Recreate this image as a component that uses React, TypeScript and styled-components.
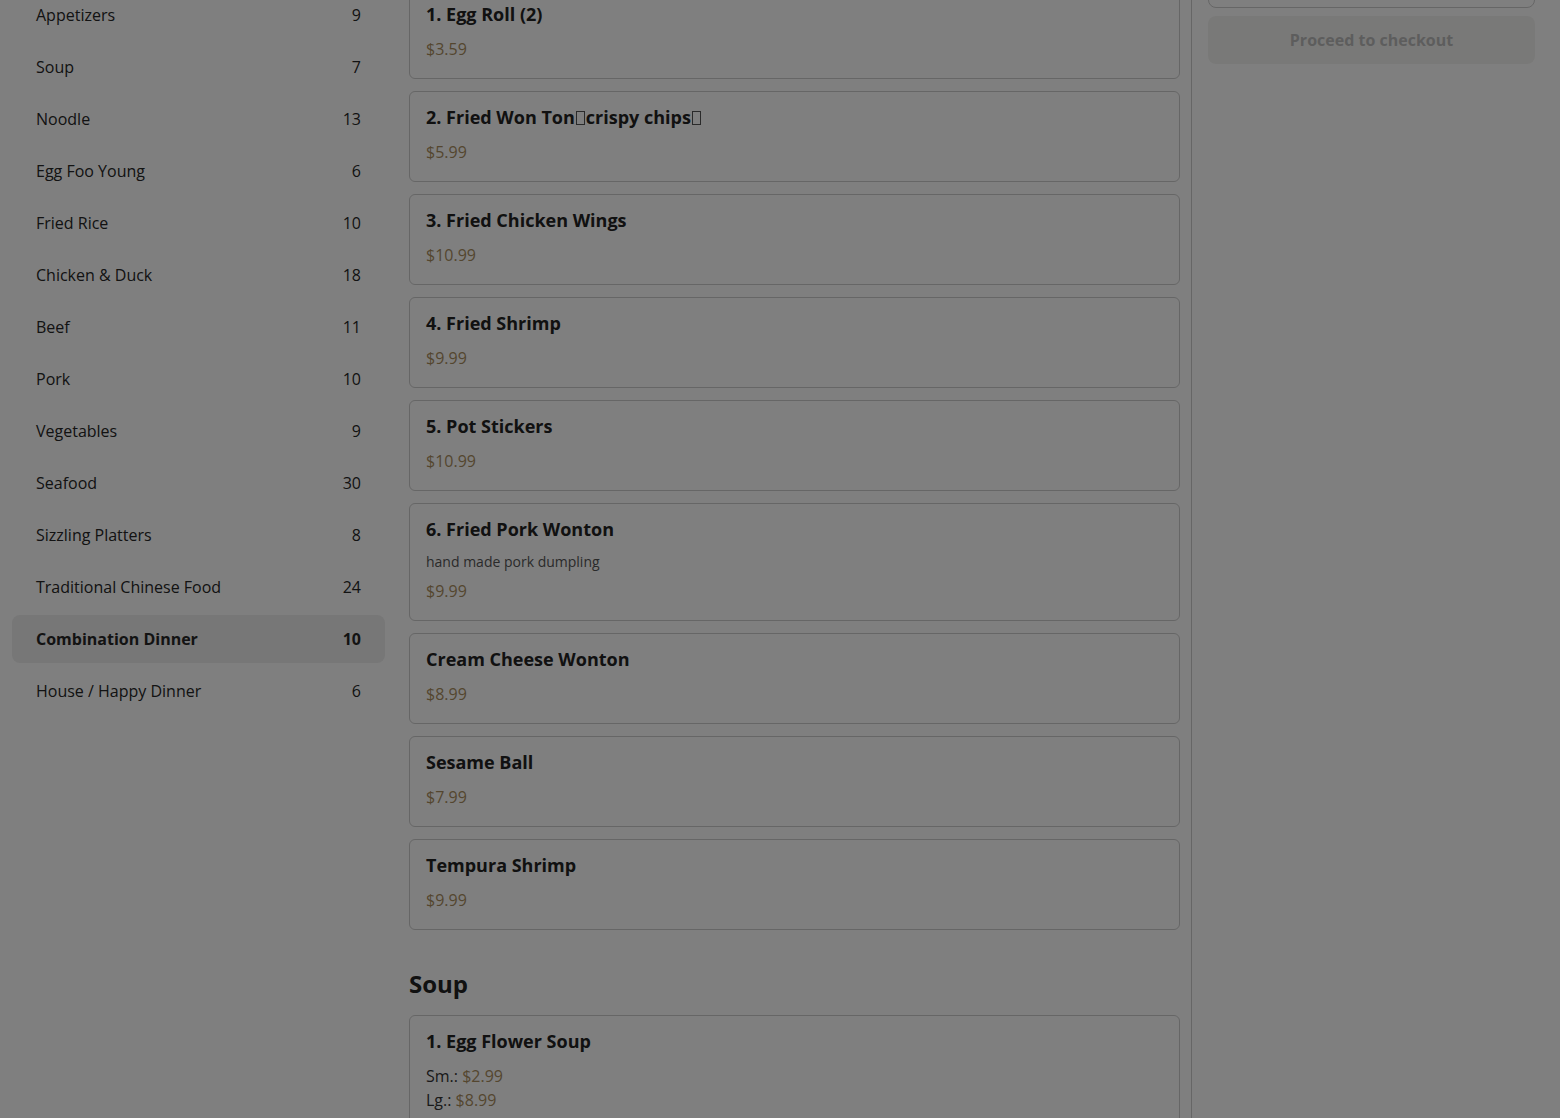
import styled, { createGlobalStyle } from 'styled-components'

const GlobalStyle = createGlobalStyle`
  html, body {
    margin: 0;
    padding: 0;
    background: #fff;
    overflow: hidden;
  }
  body {
    font-family: "Open Sans", "Noto Sans", "Liberation Sans", sans-serif;
    color: #222;
  }
  * { box-sizing: border-box; }
`

const Page = styled.div`
  display: grid;
  grid-template-columns: 397px 1fr 368px;
  height: 100vh;
  overflow: hidden;
`

const Sidebar = styled.nav`
  padding: 0 12px;
`

const CategoryList = styled.ul`
  list-style: none;
  margin: -9px 0 0;
  padding: 0;
  display: flex;
  flex-direction: column;
  gap: 4px;
`

const CategoryItem = styled.li<{ $active?: boolean }>`
  height: 48px;
  padding: 0 24px;
  display: flex;
  align-items: center;
  justify-content: space-between;
  border-radius: 8px;
  font-size: 16px;
  font-weight: ${p => (p.$active ? 700 : 400)};
  background: ${p => (p.$active ? '#eeeeee' : 'transparent')};
  color: #262626;
  cursor: pointer;
`

const Menu = styled.main`
  padding: 0 11px 0 12px;
  border-right: 1px solid #cccccc;
`

const MenuInner = styled.div`
  margin-top: -12px;
`

const DishList = styled.div`
  display: flex;
  flex-direction: column;
  gap: 12px;
`

const SectionTitle = styled.h2`
  margin: 38px 0 15px;
  font-size: 24px;
  line-height: 32px;
  font-weight: 700;
  color: #222;
`

const DishCard = styled.div`
  border: 1px solid #cccccc;
  border-radius: 6px;
  padding: 13px 16px 17px;
  display: flex;
  flex-direction: column;
`

const DishName = styled.div`
  font-size: 18px;
  line-height: 24px;
  font-weight: 700;
  color: #222;
  margin-bottom: 11px;
`

const Tofu = styled.span`
  display: inline-block;
  width: 9px;
  height: 14px;
  margin: 0 1px;
  border: 1px solid #555;
  vertical-align: -1px;
  font-size: 6px;
  line-height: 12px;
  color: transparent;
  overflow: hidden;
`

const DishDesc = styled.div`
  font-size: 14px;
  line-height: 20px;
  color: #555;
  margin: 0 0 7px;
`

const Price = styled.span`
  color: #a98d5e;
`

const PriceLine = styled.div`
  font-size: 16px;
  line-height: 24px;
  color: #333;
`

const Cart = styled.aside`
  padding: 0 25px 0 16px;
  display: flex;
  flex-direction: column;
  gap: 8px;
`

const CartBox = styled.div`
  height: 48px;
  margin-top: -40px;
  border: 1px solid #cccccc;
  border-radius: 8px;
`

const CheckoutButton = styled.button`
  height: 48px;
  border: none;
  border-radius: 8px;
  background: #f3f3f1;
  color: #bbbbbb;
  font-family: inherit;
  font-size: 16px;
  font-weight: 700;
  cursor: not-allowed;
`

const Overlay = styled.div`
  position: fixed;
  inset: 0;
  background: rgba(0, 0, 0, 0.5);
`

const categories = [
  ['Appetizers', 9],
  ['Soup', 7],
  ['Noodle', 13],
  ['Egg Foo Young', 6],
  ['Fried Rice', 10],
  ['Chicken & Duck', 18],
  ['Beef', 11],
  ['Pork', 10],
  ['Vegetables', 9],
  ['Seafood', 30],
  ['Sizzling Platters', 8],
  ['Traditional Chinese Food', 24],
  ['Combination Dinner', 10],
  ['House / Happy Dinner', 6],
] as const

type Dish = { name: React.ReactNode; desc?: string; prices: [string, string][] }

const appetizers: Dish[] = [
  { name: '1. Egg Roll (2)', prices: [['', '$3.59']] },
  {
    name: (
      <>
        2. Fried Won Ton<Tofu>（</Tofu>crispy chips<Tofu>）</Tofu>
      </>
    ),
    prices: [['', '$5.99']],
  },
  { name: '3. Fried Chicken Wings', prices: [['', '$10.99']] },
  { name: '4. Fried Shrimp', prices: [['', '$9.99']] },
  { name: '5. Pot Stickers', prices: [['', '$10.99']] },
  { name: '6. Fried Pork Wonton', desc: 'hand made pork dumpling', prices: [['', '$9.99']] },
  { name: 'Cream Cheese Wonton', prices: [['', '$8.99']] },
  { name: 'Sesame Ball', prices: [['', '$7.99']] },
  { name: 'Tempura Shrimp', prices: [['', '$9.99']] },
]

const soups: Dish[] = [
  {
    name: '1. Egg Flower Soup',
    prices: [
      ['Sm.', '$2.99'],
      ['Lg.', '$8.99'],
      ['Qt.', '$5.99'],
    ],
  },
]

const DishView = ({ dish }: { dish: Dish }) => (
  <DishCard>
    <DishName>{dish.name}</DishName>
    {dish.desc && <DishDesc>{dish.desc}</DishDesc>}
    {dish.prices.map(([label, price]) => (
      <PriceLine key={label + price}>
        {label && `${label}: `}
        <Price>{price}</Price>
      </PriceLine>
    ))}
  </DishCard>
)

export default function App() {
  return (
    <>
      <GlobalStyle />
      <Page>
        <Sidebar>
          <CategoryList>
            {categories.map(([name, count]) => (
              <CategoryItem key={name} $active={name === 'Combination Dinner'}>
                <span>{name}</span>
                <span>{count}</span>
              </CategoryItem>
            ))}
          </CategoryList>
        </Sidebar>
        <Menu>
          <MenuInner>
            <DishList>
              {appetizers.map((d, i) => (
                <DishView key={i} dish={d} />
              ))}
            </DishList>
            <SectionTitle>Soup</SectionTitle>
            <DishList>
              {soups.map((d, i) => (
                <DishView key={i} dish={d} />
              ))}
            </DishList>
          </MenuInner>
        </Menu>
        <Cart>
          <CartBox />
          <CheckoutButton disabled>Proceed to checkout</CheckoutButton>
        </Cart>
      </Page>
      <Overlay />
    </>
  )
}
